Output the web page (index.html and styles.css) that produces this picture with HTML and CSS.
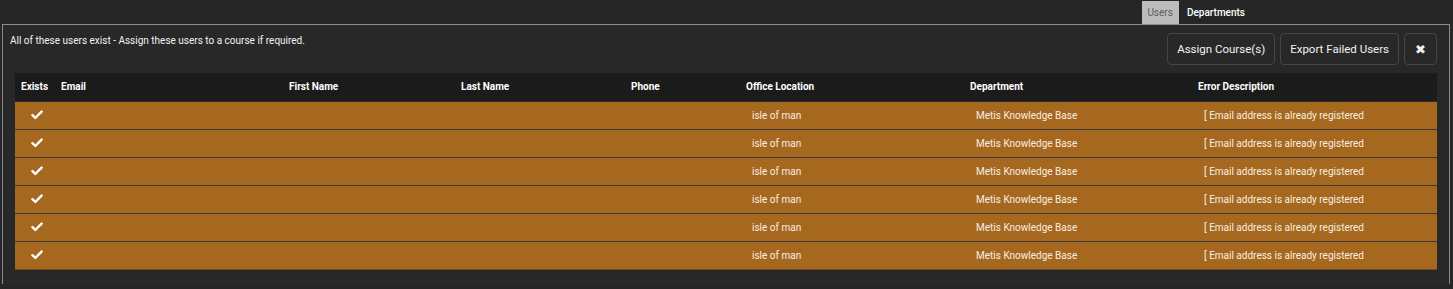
FILE: index.html
```html
<!DOCTYPE html>
<html>
<head>
<meta charset="utf-8">
<link rel="stylesheet" href="styles.css">
</head>
<body>
<div class="topbar">
  <div class="tab tab-active">Users</div>
  <div class="tab">Departments</div>
</div>
<div class="panel">
  <div class="toolbar">
    <div class="message">All of these users exist - Assign these users to a course if required.</div>
    <div class="actions">
      <button class="btn">Assign Course(s)</button>
      <button class="btn">Export Failed Users</button>
      <button class="btn btn-close">✖</button>
    </div>
  </div>
  <div class="table">
    <div class="row head">
      <div class="cell">Exists</div>
      <div class="cell">Email</div>
      <div class="cell">First Name</div>
      <div class="cell">Last Name</div>
      <div class="cell">Phone</div>
      <div class="cell">Office Location</div>
      <div class="cell">Department</div>
      <div class="cell">Error Description</div>
    </div>
    <div class="row data">
      <div class="cell check"><svg class="tick" viewBox="0 0 12 10" width="12" height="10"><path d="M1.5 5.2 L4.3 8 L10.6 1.6" fill="none" stroke="#fff" stroke-width="2.4" stroke-linecap="round" stroke-linejoin="round"/></svg></div><div class="cell"></div><div class="cell"></div><div class="cell"></div><div class="cell"></div>
      <div class="cell">isle of man</div><div class="cell">Metis Knowledge Base</div><div class="cell">[ Email address is already registered</div>
    </div>
    <div class="row data">
      <div class="cell check"><svg class="tick" viewBox="0 0 12 10" width="12" height="10"><path d="M1.5 5.2 L4.3 8 L10.6 1.6" fill="none" stroke="#fff" stroke-width="2.4" stroke-linecap="round" stroke-linejoin="round"/></svg></div><div class="cell"></div><div class="cell"></div><div class="cell"></div><div class="cell"></div>
      <div class="cell">isle of man</div><div class="cell">Metis Knowledge Base</div><div class="cell">[ Email address is already registered</div>
    </div>
    <div class="row data">
      <div class="cell check"><svg class="tick" viewBox="0 0 12 10" width="12" height="10"><path d="M1.5 5.2 L4.3 8 L10.6 1.6" fill="none" stroke="#fff" stroke-width="2.4" stroke-linecap="round" stroke-linejoin="round"/></svg></div><div class="cell"></div><div class="cell"></div><div class="cell"></div><div class="cell"></div>
      <div class="cell">isle of man</div><div class="cell">Metis Knowledge Base</div><div class="cell">[ Email address is already registered</div>
    </div>
    <div class="row data">
      <div class="cell check"><svg class="tick" viewBox="0 0 12 10" width="12" height="10"><path d="M1.5 5.2 L4.3 8 L10.6 1.6" fill="none" stroke="#fff" stroke-width="2.4" stroke-linecap="round" stroke-linejoin="round"/></svg></div><div class="cell"></div><div class="cell"></div><div class="cell"></div><div class="cell"></div>
      <div class="cell">isle of man</div><div class="cell">Metis Knowledge Base</div><div class="cell">[ Email address is already registered</div>
    </div>
    <div class="row data">
      <div class="cell check"><svg class="tick" viewBox="0 0 12 10" width="12" height="10"><path d="M1.5 5.2 L4.3 8 L10.6 1.6" fill="none" stroke="#fff" stroke-width="2.4" stroke-linecap="round" stroke-linejoin="round"/></svg></div><div class="cell"></div><div class="cell"></div><div class="cell"></div><div class="cell"></div>
      <div class="cell">isle of man</div><div class="cell">Metis Knowledge Base</div><div class="cell">[ Email address is already registered</div>
    </div>
    <div class="row data last">
      <div class="cell check"><svg class="tick" viewBox="0 0 12 10" width="12" height="10"><path d="M1.5 5.2 L4.3 8 L10.6 1.6" fill="none" stroke="#fff" stroke-width="2.4" stroke-linecap="round" stroke-linejoin="round"/></svg></div><div class="cell"></div><div class="cell"></div><div class="cell"></div><div class="cell"></div>
      <div class="cell">isle of man</div><div class="cell">Metis Knowledge Base</div><div class="cell">[ Email address is already registered</div>
    </div>
  </div>
</div>
</body>
</html>
```
FILE: styles.css
```css
html, body {
  margin: 0;
  padding: 0;
  background: #262626;
  font-family: Roboto, "Liberation Sans", sans-serif;
  font-size: 10px;
  color: #f2f2f2;
  height: 289px;
  overflow: hidden;
}
.topbar {
  height: 23px;
  padding-top: 1px;
  display: flex;
  justify-content: flex-end;
  padding-right: 200px;
}
.tab {
  height: 23px;
  line-height: 23px;
  padding: 0 8px;
  color: #ffffff;
  font-weight: 500;
}
.tab-active {
  background: #bcbcbc;
  color: #5e5e5e;
  font-weight: 400;
  padding: 0 6px 0 5px;
}
.panel {
  margin: 0 3px 0 2px;
  border: 1px solid #8c8c8c;
  border-bottom: none;
  background: #282828;
  padding: 8px 12px 14px 7px;
}
.toolbar {
  display: flex;
  justify-content: space-between;
  align-items: flex-start;
}
.message {
  padding-top: 1px;
  line-height: 13px;
}
.actions {
  display: flex;
  gap: 5px;
}
.btn {
  height: 32px;
  border: 1px solid #464646;
  border-radius: 4px;
  background: #282828;
  color: #f2f2f2;
  font-family: Roboto, "Liberation Sans", sans-serif;
  font-size: 11.5px;
  padding: 0 9px;
}
.btn-close {
  width: 33px;
  padding: 0;
  font-size: 13px;
}
.table {
  margin: 8px 0 0 5px;
}
.row {
  display: grid;
  grid-template-columns: 40px 228px 172px 170px 115px 224px 228px 1fr;
  align-items: center;
}
.head {
  height: 28px;
  background: #1b1b1b;
  border-bottom: 1px solid #2c2c2c;
  font-weight: 700;
  color: #ffffff;
}
.head .cell {
  padding-left: 6px;
  padding-bottom: 2px;
}
.data {
  height: 27px;
  background: #a5681e;
  border-bottom: 1px solid #3a3a3a;
  color: #f7efe4;
}
.data.last {
  border-bottom-color: #6e4a1e;
}
.data .cell {
  padding-left: 12px;
}
.data .check {
  padding-left: 4px;
  display: flex;
  justify-content: center;
  align-items: center;
  padding-bottom: 2px;
}
.tick {
  display: block;
}
```
